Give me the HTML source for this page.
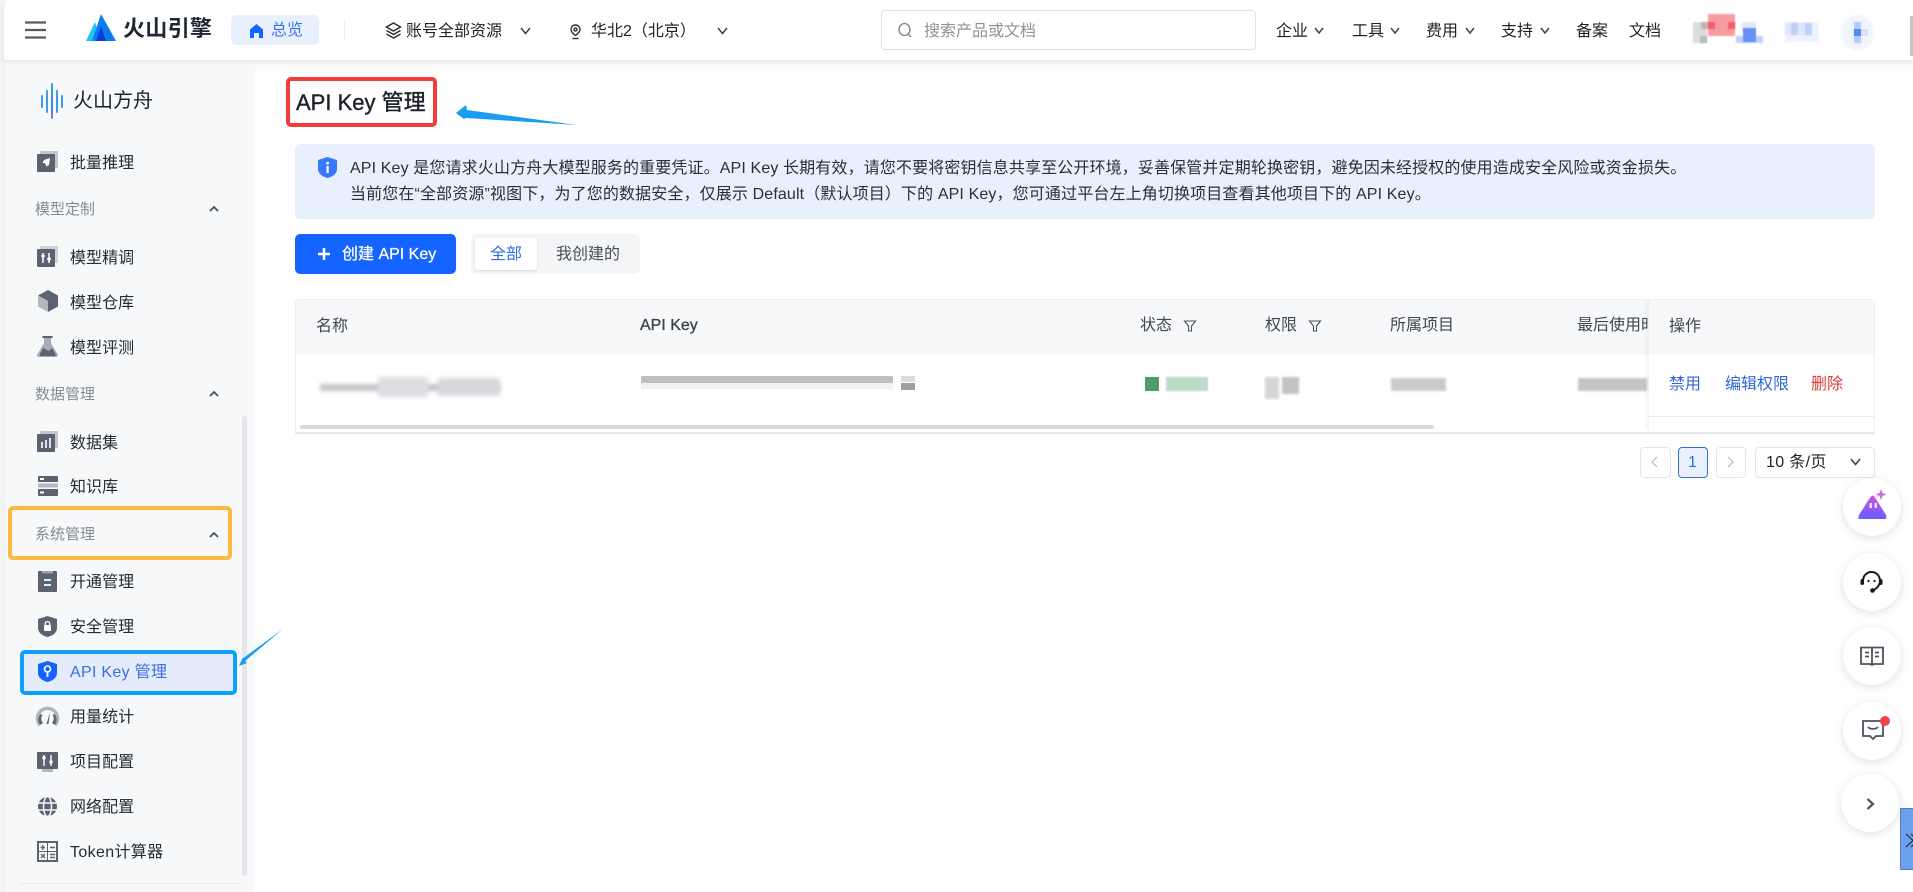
<!DOCTYPE html>
<html lang="zh"><head><meta charset="utf-8"><title>API Key 管理</title>
<style>
html,body{margin:0;padding:0;width:1913px;height:892px;overflow:hidden;background:#fff;font-family:"Liberation Sans","Noto Sans CJK SC",sans-serif;color:#1d2129}
.a,.t{position:absolute}
.t{white-space:nowrap;line-height:24px;height:24px}
svg{position:absolute;overflow:visible}
.side{font-size:16px;color:#252b33;left:70px;margin-top:1.500px;letter-spacing:.06px}
.grp{font-size:15px;color:#858c96;left:35px;margin-top:2px}
.hd{font-size:15px;color:#1d2129;top:13px}
.th{font-size:16px;color:#42464e}
.link{font-size:16px;color:#2f66d8}
.fab{position:absolute;width:58px;height:58px;border-radius:50%;background:#fff;box-shadow:0 2px 10px rgba(0,0,0,.12)}
.blur{position:absolute;filter:blur(1.500px)}
.pg{position:absolute;top:447px;height:29px;border:1px solid #e3e6ea;border-radius:4px;background:#fff;box-sizing:content-box}
</style></head><body>

<!-- left strip and sidebar -->
<div class="a" style="left:0;top:0;width:5px;height:892px;background:#f2f3f5"></div>
<div class="a" style="left:5px;top:60px;width:250px;height:832px;background:#f6f8fa"></div>
<div class="a" style="left:255px;top:60px;width:1658px;height:12px;background:linear-gradient(#f5f5f6,#fff)"></div>

<!-- header -->
<div class="a" style="left:4px;top:0;width:1909px;height:60px;background:#fff;border-top-left-radius:10px;box-shadow:0 1px 5px rgba(0,0,0,.1)"></div>
<div class="a" style="left:1910px;top:16px;width:3px;height:40px;background:#c5c5c5"></div>
<svg style="left:25px;top:21px" width="21" height="18"><path d="M0 1.500H21M0 9H21M0 16.500H21" stroke="#555a61" stroke-width="2.200"/></svg>
<svg style="left:86px;top:14px" width="30" height="27" viewBox="0 0 30 27"><path d="M0 27L9 8L15 27Z" fill="#23c4f0"/><path d="M15 0L30 27H19L15 14L10 27H6Z" fill="#0a7df0"/><path d="M10 27L15 12L20 27Z" fill="#0b3ed8"/></svg>
<div class="t" style="left:123px;top:15px;font-size:22px;font-weight:700;letter-spacing:.3px;color:#1f2733;line-height:28px;height:28px">火山引擎</div>
<div class="a" style="left:231px;top:15px;width:88px;height:30px;background:#e8f0fe;border-radius:5px"></div>
<svg style="left:250px;top:24px" width="13" height="14" viewBox="0 0 13 14"><path d="M6.500 0L13 5.500V14H9V9H4V14H0V5.500Z" fill="#1664ff"/></svg>
<div class="t" style="left:271px;top:19px;font-size:16px;color:#3f74e6">总览</div>
<div class="a" style="left:344px;top:20px;width:1px;height:20px;background:#eceef0"></div>
<svg style="left:385px;top:22px" width="17" height="17" viewBox="0 0 17 17" fill="none" stroke="#2b2f36" stroke-width="1.500"><path d="M8.500 1L15.500 5L8.500 9L1.500 5Z"/><path d="M1.500 8.500L8.500 12.500L15.500 8.500M1.500 12L8.500 16L15.500 12"/></svg>
<div class="t hd" style="left:406px;top:20px;font-size:16px">账号全部资源</div>
<svg style="left:520px;top:27px" width="11" height="8" fill="none" stroke="#41464e" stroke-width="1.600"><path d="M1 1L5.500 6.500L10 1"/></svg>
<svg style="left:570px;top:24px" width="11" height="16" viewBox="0 0 11 16" fill="none" stroke="#2b2f36" stroke-width="1.400"><path d="M5.500 1C2.700 1 1 3 1 5.400C1 8 3.500 10 5.500 11.500C7.500 10 10 8 10 5.400C10 3 8.300 1 5.500 1Z"/><circle cx="5.500" cy="5.500" r="1.500"/><path d="M2.500 14.500H8.500"/></svg>
<div class="t hd" style="left:591px;top:20px;font-size:16px">华北2（北京）</div>
<svg style="left:717px;top:27px" width="11" height="8" fill="none" stroke="#41464e" stroke-width="1.600"><path d="M1 1L5.500 6.500L10 1"/></svg>

<div class="a" style="left:881px;top:10px;width:375px;height:40px;box-sizing:border-box;border:1px solid #dfe2e6;border-radius:4px;background:#fff"></div>
<svg style="left:898px;top:23px" width="14" height="15" fill="none" stroke="#7b818a" stroke-width="1.300"><ellipse cx="6.500" cy="6.500" rx="5.500" ry="6"/><path d="M10 11L13 14"/></svg>
<div class="t" style="left:924px;top:20px;font-size:16px;color:#8d939b">搜索产品或文档</div>

<div class="t hd" style="left:1276px;top:20px;font-size:16px">企业</div>
<div class="t hd" style="left:1352px;top:20px;font-size:16px">工具</div>
<div class="t hd" style="left:1426px;top:20px;font-size:16px">费用</div>
<div class="t hd" style="left:1501px;top:20px;font-size:16px">支持</div>
<div class="t hd" style="left:1576px;top:20px;font-size:16px">备案</div>
<div class="t hd" style="left:1629px;top:20px;font-size:16px">文档</div>
<svg style="left:1314px;top:27px" width="10" height="8" fill="none" stroke="#41464e" stroke-width="1.500"><path d="M1 1L5 6L9 1"/></svg>
<svg style="left:1390px;top:27px" width="10" height="8" fill="none" stroke="#41464e" stroke-width="1.500"><path d="M1 1L5 6L9 1"/></svg>
<svg style="left:1465px;top:27px" width="10" height="8" fill="none" stroke="#41464e" stroke-width="1.500"><path d="M1 1L5 6L9 1"/></svg>
<svg style="left:1540px;top:27px" width="10" height="8" fill="none" stroke="#41464e" stroke-width="1.500"><path d="M1 1L5 6L9 1"/></svg>

<!-- mosaics -->
<div class="a" style="left:1693px;top:22px;width:14px;height:21px;background:#dcdcdc;filter:blur(.7px)"></div>
<div class="a" style="left:1701px;top:22px;width:7px;height:7px;background:#c4b4b8;filter:blur(.5px)"></div>
<div class="a" style="left:1700px;top:36px;width:7px;height:7px;background:#bdbdbd;filter:blur(.5px)"></div>
<div class="a" style="left:1708px;top:14px;width:27px;height:22px;background:#f89ca0;filter:blur(.7px)"></div>
<div class="a" style="left:1708px;top:22px;width:7px;height:7px;background:#ef5f6c;filter:blur(.5px)"></div>
<div class="a" style="left:1728px;top:22px;width:7px;height:7px;background:#ef5f6c;filter:blur(.5px)"></div>
<div class="a" style="left:1742px;top:22px;width:14px;height:10px;background:#e4e6fb;filter:blur(.7px)"></div>
<div class="a" style="left:1736px;top:36px;width:27px;height:7px;background:#bcd0fa;filter:blur(.7px)"></div>
<div class="a" style="left:1743px;top:28px;width:13px;height:14px;background:#6a90f8;filter:blur(.5px)"></div>
<div class="a" style="left:1785px;top:22px;width:33px;height:20px;background:#eef2fe;filter:blur(.8px)"></div>
<div class="a" style="left:1785px;top:23px;width:26px;height:12px;background:#dfe7fc;filter:blur(.8px)"></div>
<div class="a" style="left:1791px;top:23px;width:7px;height:12px;background:#c0d0f9;filter:blur(.6px)"></div>
<div class="a" style="left:1805px;top:23px;width:7px;height:12px;background:#c0d0f9;filter:blur(.6px)"></div>
<div class="a" style="left:1841px;top:15px;width:33px;height:35px;border-radius:50%;background:#f0f4fe;filter:blur(1px)"></div>
<div class="a" style="left:1854px;top:22px;width:7px;height:21px;background:#b3c9f9;filter:blur(.6px)"></div>
<div class="a" style="left:1854px;top:29px;width:7px;height:7px;background:#4f8cf5"></div>
<div class="a" style="left:1861px;top:29px;width:7px;height:7px;background:#d7e2fb"></div>

<!-- sidebar logo -->
<svg style="left:41px;top:83px" width="22" height="36" viewBox="0 0 22 36"><defs><linearGradient id="lg" x1="0" y1="0" x2="0" y2="1"><stop offset="0" stop-color="#23a7f0"/><stop offset=".7" stop-color="#3f7de8"/><stop offset="1" stop-color="#a46bf0"/></linearGradient></defs><rect x="0" y="12" width="2" height="13" rx="1" fill="#3f9be8"/><rect x="5" y="7" width="2" height="23" rx="1" fill="#3f9be8"/><rect x="10" y="0" width="2" height="36" rx="1" fill="url(#lg)"/><rect x="15" y="7" width="2" height="23" rx="1" fill="#3f9be8"/><rect x="20" y="12" width="2" height="13" rx="1" fill="#3f9be8"/></svg>
<div class="t" style="left:73px;top:87px;font-size:20px;color:#1d2129;line-height:28px;height:28px">火山方舟</div>

<!-- sidebar items -->
<div class="t side" style="top:150px">批量推理</div>
<div class="t grp" style="top:196px">模型定制</div>
<div class="t side" style="top:245px">模型精调</div>
<div class="t side" style="top:290px">模型仓库</div>
<div class="t side" style="top:335px">模型评测</div>
<div class="t grp" style="top:381px">数据管理</div>
<div class="t side" style="top:430px">数据集</div>
<div class="t side" style="top:474px">知识库</div>
<div class="t grp" style="top:521px">系统管理</div>
<div class="t side" style="top:569px">开通管理</div>
<div class="t side" style="top:614px">安全管理</div>

<div class="a" style="left:20px;top:650px;width:217px;height:45px;box-sizing:border-box;border:4px solid #0ea0f7;border-radius:5px;background:#e4ebfa"></div>
<div class="t side" style="top:659px;color:#3a6fe0;letter-spacing:.3px">API Key 管理</div>
<div class="t side" style="top:704px">用量统计</div>
<div class="t side" style="top:749px">项目配置</div>
<div class="t side" style="top:794px">网络配置</div>
<div class="t side" style="top:839px;letter-spacing:.35px">Token计算器</div>

<div class="a" style="left:8px;top:506px;width:224px;height:54px;box-sizing:border-box;border:4px solid #fdb93d;border-radius:5px"></div>
<div class="a" style="left:242px;top:416px;width:5px;height:460px;border-radius:3px;background:#e4e6e9"></div>
<div class="a" style="left:20px;top:883px;width:220px;height:1px;background:#e9ebee"></div>

<svg style="left:209px;top:205px" width="10" height="7" fill="none" stroke="#4b5058" stroke-width="1.800"><path d="M1 6L5 2L9 6"/></svg>
<svg style="left:209px;top:390px" width="10" height="7" fill="none" stroke="#4b5058" stroke-width="1.800"><path d="M1 6L5 2L9 6"/></svg>
<svg style="left:209px;top:531px" width="10" height="7" fill="none" stroke="#4b5058" stroke-width="1.800"><path d="M1 6L5 2L9 6"/></svg>

<!-- sidebar icons -->
<svg style="left:37px;top:151px" width="21" height="21" viewBox="0 0 21 21"><rect x="3" y="0" width="18" height="17" rx="1" fill="#c3c6cb"/><rect x="0" y="3" width="18" height="18" rx="1" fill="#5c6370"/><path d="M13 7L7 9L5.500 12L7.500 12L9 14L9 15.500L12 14Z" fill="#fff"/></svg>
<svg style="left:37px;top:246px" width="21" height="21" viewBox="0 0 21 21"><rect x="3" y="0" width="18" height="17" rx="1" fill="#d0d3d7"/><rect x="0" y="3" width="18" height="18" rx="1" fill="#5c6370"/><path d="M6 7V17M12 7V17" stroke="#fff" stroke-width="1.500"/><circle cx="6" cy="10" r="1.800" fill="#fff"/><circle cx="12" cy="13" r="1.800" fill="#fff"/></svg>
<svg style="left:38px;top:290px" width="20" height="22" viewBox="0 0 20 22"><path d="M10 0L20 5.500V16.500L10 22Z" fill="#5c6370"/><path d="M10 0L0 5.500L10 11Z" fill="#5c6370"/><path d="M0 5.500V16.500L10 22V11Z" fill="#b4b8be"/></svg>
<svg style="left:37px;top:336px" width="21" height="21" viewBox="0 0 21 21"><path d="M5 0H16V2H14V7L21 19C21 20 20 21 19 21H2C1 21 0 20 0 19L7 7V2H5Z" fill="#a9adb3"/><path d="M6 0H15V2H6Z" fill="#5c6370"/><path d="M3 18L6 12L12 15L15 12L19 19L18 20H3Z" fill="#5c6370"/></svg>
<svg style="left:37px;top:431px" width="21" height="21" viewBox="0 0 21 21"><rect x="3" y="0" width="18" height="17" rx="1" fill="#c3c6cb"/><rect x="0" y="3" width="18" height="18" rx="1" fill="#5c6370"/><path d="M5 11V17M9 9V17M13 7V17" stroke="#dde0e3" stroke-width="2"/></svg>
<svg style="left:38px;top:476px" width="20" height="20" viewBox="0 0 20 20"><rect width="20" height="6" rx="1" fill="#5c6370"/><rect y="7.500" width="20" height="4" fill="#b4b8be"/><rect y="13" width="20" height="7" rx="1" fill="#5c6370"/><rect x="2" y="2" width="4" height="2" fill="#fff"/><rect x="2" y="15.500" width="4" height="2" fill="#fff"/></svg>
<svg style="left:38px;top:571px" width="19" height="21" viewBox="0 0 19 21"><rect y="0" width="19" height="21" rx="1" fill="#5c6370"/><rect x="4" y="0" width="11" height="2.500" fill="#9ea2a9"/><path d="M6 9H13M6 14H13" stroke="#fff" stroke-width="1.800"/></svg>
<svg style="left:38px;top:616px" width="19" height="21" viewBox="0 0 19 21"><path d="M9.500 0L19 3V12C19 17 14 20 9.500 21C5 20 0 17 0 12V3Z" fill="#5c6370"/><rect x="6" y="9" width="7" height="6" rx="1" fill="#fff"/><path d="M7.300 9V7.500C7.300 5 11.700 5 11.700 7.500V9" stroke="#fff" stroke-width="1.300" fill="none"/></svg>
<svg style="left:38px;top:661px" width="19" height="21" viewBox="0 0 19 21"><path d="M9.500 0L19 3V12C19 17 14 20 9.500 21C5 20 0 17 0 12V3Z" fill="#1664ff"/><circle cx="9.500" cy="8" r="3" fill="none" stroke="#fff" stroke-width="1.600"/><path d="M9.500 11V16" stroke="#fff" stroke-width="1.800"/></svg>
<svg style="left:37px;top:706px" width="21" height="21" viewBox="0 0 21 21"><path d="M3 19A10 10 0 1 1 18 19" fill="none" stroke="#b0b4b9" stroke-width="3.500"/><path d="M3.500 8A9 9 0 0 0 3 19L6 17A6 6 0 0 1 5.500 9Z" fill="#5c6370"/><path d="M17.500 8A9 9 0 0 1 18 19L15 17A6 6 0 0 0 15.500 9Z" fill="#5c6370"/><path d="M13 6L11.500 18H9.500Z" fill="#5c6370"/></svg>
<svg style="left:37px;top:752px" width="21" height="20" viewBox="0 0 21 20"><rect width="21" height="17" rx="1" fill="#5c6370"/><rect x="5" y="17" width="11" height="3" fill="#b4b8be"/><path d="M7 3V14M14 3V14" stroke="#fff" stroke-width="1.400"/><circle cx="7" cy="6" r="1.700" fill="#fff"/><circle cx="14" cy="10" r="1.700" fill="#fff"/></svg>
<svg style="left:37px;top:796px" width="21" height="21" viewBox="0 0 21 21" fill="none"><circle cx="10.500" cy="10.500" r="9.500" fill="#5c6370"/><ellipse cx="10.500" cy="10.500" rx="4" ry="10" stroke="#f6f8fa" stroke-width="1.500"/><path d="M0 7H21M0 14H21" stroke="#f6f8fa" stroke-width="1.500"/></svg>
<svg style="left:37px;top:841px" width="21" height="21" viewBox="0 0 21 21" fill="none"><rect x="1" y="1" width="19" height="19" stroke="#5c6370" stroke-width="2"/><path d="M10.500 1V20M1 10.500H20" stroke="#5c6370" stroke-width="1"/><path d="M3.500 6.500H8M5.800 4V9M13 6.500H18M4 13L8 17M8 13L4 17M13 13.500H18M13 16.500H18" stroke="#5c6370" stroke-width="1.400"/></svg>

<!-- sidebar arrow -->
<svg style="left:238px;top:628px" width="46" height="40"><path d="M1 38L4 31L45 1L7 33L9 35Z" fill="#1a9cf0"/></svg>

<!-- title -->
<div class="a" style="left:286px;top:77px;width:151px;height:50px;box-sizing:border-box;border:4px solid #f43b3b;border-radius:5px"></div>
<div class="t" style="left:296px;top:88px;font-size:22px;line-height:30px;height:30px;color:#1d2129;-webkit-text-stroke:.4px #1d2129">API Key 管理</div>
<svg style="left:455px;top:105px" width="125" height="22"><path d="M1 8L11 0L12 5L122 20L11 13L9 14Z" fill="#1a9cf0"/></svg>

<!-- alert -->
<div class="a" style="left:295px;top:144px;width:1580px;height:75px;background:#e8effd;border-radius:5px"></div>
<svg style="left:318px;top:157px" width="19" height="21" viewBox="0 0 19 21"><path d="M9.500 0L19 3V12C19 17 14 20 9.500 21C5 20 0 17 0 12V3Z" fill="#1664ff" opacity=".85"/><rect x="8.500" y="9" width="2.200" height="7" fill="#fff"/><circle cx="9.600" cy="6.200" r="1.400" fill="#fff"/></svg>
<div class="t" style="left:350px;top:157px;font-size:16px;letter-spacing:.13px;color:#2a2f37">API Key 是您请求火山方舟大模型服务的重要凭证。API Key 长期有效，请您不要将密钥信息共享至公开环境，妥善保管并定期轮换密钥，避免因未经授权的使用造成安全风险或资金损失。</div>
<div class="t" style="left:350px;top:183px;font-size:16px;letter-spacing:.13px;color:#2a2f37">当前您在“全部资源”视图下，为了您的数据安全，仅展示 Default（默认项目）下的 API Key，您可通过平台左上角切换项目查看其他项目下的 API Key。</div>

<!-- buttons -->
<div class="a" style="left:295px;top:234px;width:161px;height:40px;background:#1664ff;border-radius:5px"></div>
<svg style="left:318px;top:248px" width="12" height="12"><path d="M6 0V12M0 6H12" stroke="#fff" stroke-width="2.600"/></svg>
<div class="t" style="left:342px;top:243px;font-size:16px;color:#fff;-webkit-text-stroke:.25px #fff">创建 API Key</div>
<div class="a" style="left:471px;top:234px;width:169px;height:40px;background:#f3f5f7;border-radius:5px"></div>
<div class="a" style="left:475px;top:238px;width:62px;height:32px;background:#fff;border-radius:3px;box-shadow:0 1px 2px rgba(0,0,0,.12)"></div>
<div class="t" style="left:490px;top:243px;font-size:16px;color:#2f6fe4">全部</div>
<div class="t" style="left:556px;top:243px;font-size:16px;color:#4a4f57">我创建的</div>

<!-- table -->
<div class="a" style="left:295px;top:299px;width:1580px;height:135px;box-sizing:border-box;border:1px solid #eceef1;border-bottom:2px solid #e6e8eb;border-radius:4px 4px 0 0;background:#fff"></div>
<div class="a" style="left:296px;top:300px;width:1578px;height:55px;background:#f6f8fa"></div>
<div class="t th" style="left:316px;top:315px">名称</div>
<div class="t th" style="left:640px;top:314px;-webkit-text-stroke:.3px #3b4048;color:#3b4048">API Key</div>
<div class="t th" style="left:1140px;top:314px">状态</div>
<svg style="left:1184px;top:320px" width="12" height="12" fill="none" stroke="#4a4f57" stroke-width="1.100"><path d="M.5 1H11.500L7.500 6V11H4.500V6Z"/></svg>
<div class="t th" style="left:1265px;top:314px">权限</div>
<svg style="left:1309px;top:320px" width="12" height="12" fill="none" stroke="#4a4f57" stroke-width="1.100"><path d="M.5 1H11.500L7.500 6V11H4.500V6Z"/></svg>
<div class="t th" style="left:1390px;top:314px">所属项目</div>
<div class="a" style="left:1577px;top:314px;width:71px;height:24px;overflow:hidden"><div class="t th" style="left:0;top:0">最后使用时间</div></div>

<!-- blurred row -->
<div class="a" style="left:320px;top:384px;width:180px;height:7px;background:#c2c4c8;filter:blur(2px)"></div>
<div class="a" style="left:378px;top:377px;width:50px;height:20px;background:#dcdee2;filter:blur(2px)"></div>
<div class="a" style="left:438px;top:378px;width:62px;height:18px;background:#d6d8dc;filter:blur(2px)"></div>
<div class="a" style="left:641px;top:376px;width:252px;height:7px;background:#c0c0c2"></div>
<div class="a" style="left:641px;top:383px;width:252px;height:6px;background:#f2f2f3"></div>
<div class="a" style="left:901px;top:376px;width:14px;height:6px;background:#dcdcdc"></div>
<div class="a" style="left:901px;top:383px;width:14px;height:7px;background:#9e9e9e"></div>
<div class="a" style="left:1145px;top:377px;width:14px;height:14px;background:#4d9f6f"></div>
<div class="a" style="left:1166px;top:377px;width:42px;height:14px;background:#bcdcc9;filter:blur(.8px)"></div>
<div class="a" style="left:1265px;top:377px;width:14px;height:22px;background:#d6d6d6;filter:blur(1px)"></div>
<div class="a" style="left:1282px;top:377px;width:17px;height:17px;background:#c2c2c2;filter:blur(1px)"></div>
<div class="a" style="left:1391px;top:378px;width:55px;height:13px;background:#cbcbcd;filter:blur(1px)"></div>
<div class="a" style="left:1578px;top:378px;width:69px;height:13px;background:#c4c4c6;filter:blur(1px)"></div>

<!-- fixed col -->
<div class="a" style="left:1644px;top:300px;width:5px;height:130px;background:linear-gradient(90deg,rgba(255,255,255,0),rgba(0,0,0,.05))"></div>
<div class="a" style="left:1649px;top:300px;width:225px;height:117px;background:#fff;border-bottom:1px solid #e9ebee;box-sizing:border-box"></div>
<div class="a" style="left:1649px;top:300px;width:225px;height:55px;background:#f6f8fa"></div>
<div class="t th" style="left:1669px;top:315px">操作</div>
<div class="t link" style="left:1669px;top:373px">禁用</div>
<div class="t link" style="left:1725px;top:373px">编辑权限</div>
<div class="t link" style="left:1811px;top:373px;color:#d6403b">删除</div>

<div class="a" style="left:300px;top:425px;width:1134px;height:4px;border-radius:2px;background:#d5d8dc"></div>

<!-- pagination -->
<div class="pg" style="left:1640px;width:29px"></div>
<svg style="left:1651px;top:456px" width="7" height="12" fill="none" stroke="#b5b9bf" stroke-width="1.200"><path d="M6 1L1 6L6 11"/></svg>
<div class="pg" style="left:1678px;width:28px;background:#eaf1fd;border-color:#2e6fd8"></div>
<div class="t" style="left:1688px;top:451px;font-size:16px;color:#2f6fe4">1</div>
<div class="pg" style="left:1716px;width:28px"></div>
<svg style="left:1727px;top:456px" width="7" height="12" fill="none" stroke="#b5b9bf" stroke-width="1.200"><path d="M1 1L6 6L1 11"/></svg>
<div class="pg" style="left:1755px;width:118px"></div>
<div class="t" style="left:1766px;top:451px;font-size:16px;letter-spacing:.35px;color:#1d2129">10 条/页</div>
<svg style="left:1850px;top:458px" width="11" height="8" fill="none" stroke="#41464e" stroke-width="1.600"><path d="M1 1L5.500 6.500L10 1"/></svg>

<!-- fabs -->
<div class="fab" style="left:1843px;top:478px"></div>
<svg style="left:1857px;top:489px" width="31" height="31" viewBox="0 0 31 31"><defs><linearGradient id="m" x1="0" y1="0" x2="0" y2="1"><stop offset="0" stop-color="#c855e0"/><stop offset="1" stop-color="#6a5cff"/></linearGradient></defs><path d="M12 8L0 30H8Z" fill="#bdeefa"/><path d="M17 7L29 26C30 29 29 30 28 30H3C2 30 1 29 2 26L13 9C14 7 16 6 17 7Z" fill="url(#m)"/><rect x="12.500" y="14" width="2.500" height="5" fill="#fff" opacity=".8"/><rect x="17.500" y="14" width="2.500" height="5" fill="#fff" opacity=".8"/><path d="M24 0L25.500 4L29.500 5.500L25.500 7L24 11L22.500 7L18.500 5.500L22.500 4Z" fill="#d56ae8"/></svg>
<div class="fab" style="left:1843px;top:553px"></div>
<svg style="left:1860px;top:570px" width="24" height="24" viewBox="0 0 24 24" fill="none"><path d="M3 11C3 5.500 7 2 11.500 2C16.500 2 20 6 20 11C20 15 17 18 14 20" stroke="#15181d" stroke-width="2"/><rect x="0.500" y="9" width="3.500" height="6" rx="1.700" fill="#15181d"/><rect x="19" y="9" width="3.500" height="6" rx="1.700" fill="#15181d"/><circle cx="12.500" cy="20.500" r="2.300" fill="#15181d"/><circle cx="8.500" cy="11" r="1.100" fill="#15181d"/><circle cx="14.500" cy="11" r="1.100" fill="#15181d"/></svg>
<div class="fab" style="left:1843px;top:627px"></div>
<svg style="left:1860px;top:646px" width="24" height="20" viewBox="0 0 24 20" fill="none" stroke="#4d525c" stroke-width="1.800"><path d="M1 1.500H11.500L12 2.500L12.500 1.500H23V18H14L12 19L10 18H1Z"/><path d="M12 2.500V18"/><path d="M5 6.500H9M5 10.500H9M15 6.500H19M15 10.500H19"/></svg>
<div class="fab" style="left:1843px;top:702px"></div>
<svg style="left:1862px;top:720px" width="22" height="21" viewBox="0 0 22 21" fill="none" stroke="#4d525c" stroke-width="1.800"><path d="M1 1H21V16H14L11 19L8 16H1Z"/><path d="M6 7C8 9.500 14 9.500 16 7"/></svg>
<div class="a" style="left:1880px;top:716px;width:10px;height:10px;border-radius:50%;background:#f0434c"></div>
<div class="fab" style="left:1841px;top:774px"></div>
<svg style="left:1866px;top:798px" width="9" height="12" fill="none" stroke="#4d525c" stroke-width="2.200"><path d="M1.500 1L7 6L1.500 11"/></svg>
<div class="a" style="left:1900px;top:808px;width:13px;height:62px;box-sizing:border-box;background:#6aa0ee;border:1px solid #5a7fb5;border-right:0"></div>
<svg style="left:1906px;top:834px" width="7" height="13" fill="none" stroke="#223" stroke-width="1.100"><path d="M0 0L7 6.500L0 13M5 0L12 6.500L5 13"/></svg>

</body></html>
